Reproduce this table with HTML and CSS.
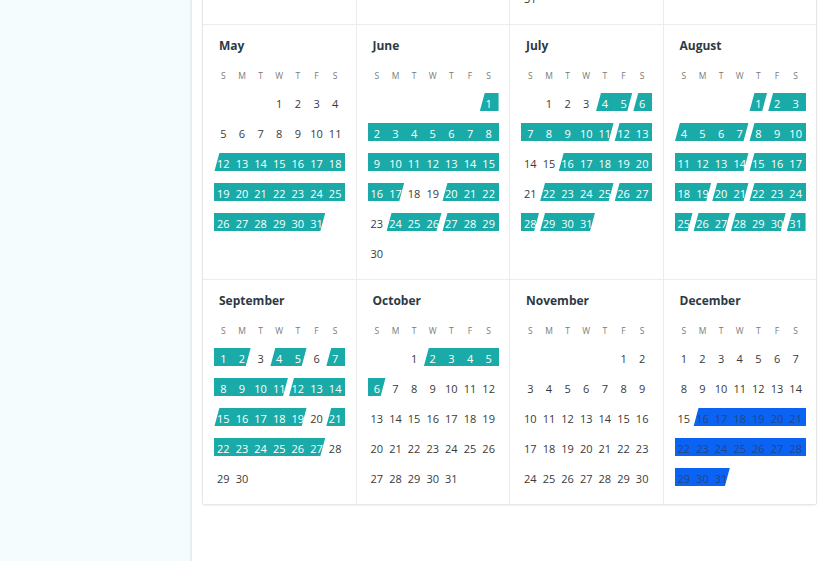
FILE: index.html
```html
<!DOCTYPE html>
<html lang="en">
<head>
<meta charset="utf-8">
<title>Calendar</title>
<link rel="stylesheet" href="styles.css">
</head>
<body>
<aside class="sidebar"></aside>
<main class="main">
  <div class="card">
    <section class="month">
      <h3 class="mname">January</h3>
      <div class="wk"><span>S</span><span>M</span><span>T</span><span>W</span><span>T</span><span>F</span><span>S</span></div>
      <div class="days">
        <span class="c o2">1</span><span class="c">2</span><span class="c">3</span><span class="c">4</span><span class="c">5</span>
        <span class="c">6</span><span class="c">7</span><span class="c">8</span><span class="c">9</span><span class="c">10</span><span class="c">11</span><span class="c">12</span>
        <span class="c">13</span><span class="c">14</span><span class="c">15</span><span class="c">16</span><span class="c">17</span><span class="c">18</span><span class="c">19</span>
        <span class="c">20</span><span class="c">21</span><span class="c">22</span><span class="c">23</span><span class="c">24</span><span class="c">25</span><span class="c">26</span>
        <span class="c">27</span><span class="c">28</span><span class="c">29</span><span class="c">30</span><span class="c">31</span>
      </div>
    </section>
    <section class="month">
      <h3 class="mname">February</h3>
      <div class="wk"><span>S</span><span>M</span><span>T</span><span>W</span><span>T</span><span>F</span><span>S</span></div>
      <div class="days">
        <span class="c o5">1</span><span class="c">2</span>
        <span class="c">3</span><span class="c">4</span><span class="c">5</span><span class="c">6</span><span class="c">7</span><span class="c">8</span><span class="c">9</span>
        <span class="c">10</span><span class="c">11</span><span class="c">12</span><span class="c">13</span><span class="c">14</span><span class="c">15</span><span class="c">16</span>
        <span class="c">17</span><span class="c">18</span><span class="c">19</span><span class="c">20</span><span class="c">21</span><span class="c">22</span><span class="c">23</span>
        <span class="c">24</span><span class="c">25</span><span class="c">26</span><span class="c">27</span><span class="c">28</span>
      </div>
    </section>
    <section class="month">
      <h3 class="mname">March</h3>
      <div class="wk"><span>S</span><span>M</span><span>T</span><span>W</span><span>T</span><span>F</span><span>S</span></div>
      <div class="days">
        <span class="c o5">1</span><span class="c">2</span>
        <span class="c">3</span><span class="c">4</span><span class="c">5</span><span class="c">6</span><span class="c">7</span><span class="c">8</span><span class="c">9</span>
        <span class="c">10</span><span class="c">11</span><span class="c">12</span><span class="c">13</span><span class="c">14</span><span class="c">15</span><span class="c">16</span>
        <span class="c">17</span><span class="c">18</span><span class="c">19</span><span class="c">20</span><span class="c">21</span><span class="c">22</span><span class="c">23</span>
        <span class="c">24</span><span class="c">25</span><span class="c">26</span><span class="c">27</span><span class="c">28</span><span class="c">29</span><span class="c">30</span>
        <span class="c">31</span>
      </div>
    </section>
    <section class="month">
      <h3 class="mname">April</h3>
      <div class="wk"><span>S</span><span>M</span><span>T</span><span>W</span><span>T</span><span>F</span><span>S</span></div>
      <div class="days">
        <span class="c o1">1</span><span class="c">2</span><span class="c">3</span><span class="c">4</span><span class="c">5</span><span class="c">6</span>
        <span class="c">7</span><span class="c">8</span><span class="c">9</span><span class="c">10</span><span class="c">11</span><span class="c">12</span><span class="c">13</span>
        <span class="c">14</span><span class="c">15</span><span class="c">16</span><span class="c">17</span><span class="c">18</span><span class="c">19</span><span class="c">20</span>
        <span class="c">21</span><span class="c">22</span><span class="c">23</span><span class="c">24</span><span class="c">25</span><span class="c">26</span><span class="c">27</span>
        <span class="c">28</span><span class="c">29</span><span class="c">30</span>
      </div>
    </section>

    <section class="month">
      <h3 class="mname">May</h3>
      <div class="wk"><span>S</span><span>M</span><span>T</span><span>W</span><span>T</span><span>F</span><span>S</span></div>
      <div class="days">
        <span class="c o3">1</span><span class="c">2</span><span class="c">3</span><span class="c">4</span>
        <span class="c">5</span><span class="c">6</span><span class="c">7</span><span class="c">8</span><span class="c">9</span><span class="c">10</span><span class="c">11</span>
        <span class="c t s">12</span><span class="c t">13</span><span class="c t">14</span><span class="c t">15</span><span class="c t">16</span><span class="c t">17</span><span class="c t">18</span>
        <span class="c t">19</span><span class="c t">20</span><span class="c t">21</span><span class="c t">22</span><span class="c t">23</span><span class="c t">24</span><span class="c t">25</span>
        <span class="c t">26</span><span class="c t">27</span><span class="c t">28</span><span class="c t">29</span><span class="c t">30</span><span class="c t e">31</span>
      </div>
    </section>
    <section class="month">
      <h3 class="mname">June</h3>
      <div class="wk"><span>S</span><span>M</span><span>T</span><span>W</span><span>T</span><span>F</span><span>S</span></div>
      <div class="days">
        <span class="c t s o6">1</span>
        <span class="c t">2</span><span class="c t">3</span><span class="c t">4</span><span class="c t">5</span><span class="c t">6</span><span class="c t">7</span><span class="c t">8</span>
        <span class="c t">9</span><span class="c t">10</span><span class="c t">11</span><span class="c t">12</span><span class="c t">13</span><span class="c t">14</span><span class="c t">15</span>
        <span class="c t">16</span><span class="c t e">17</span><span class="c">18</span><span class="c">19</span><span class="c t s">20</span><span class="c t">21</span><span class="c t">22</span>
        <span class="c">23</span><span class="c t s">24</span><span class="c t">25</span><span class="c t e">26</span><span class="c t s">27</span><span class="c t">28</span><span class="c t">29</span>
        <span class="c">30</span>
      </div>
    </section>
    <section class="month">
      <h3 class="mname">July</h3>
      <div class="wk"><span>S</span><span>M</span><span>T</span><span>W</span><span>T</span><span>F</span><span>S</span></div>
      <div class="days">
        <span class="c o1">1</span><span class="c">2</span><span class="c">3</span><span class="c t s">4</span><span class="c t e">5</span><span class="c t s">6</span>
        <span class="c t">7</span><span class="c t">8</span><span class="c t">9</span><span class="c t">10</span><span class="c t e">11</span><span class="c t s">12</span><span class="c t">13</span>
        <span class="c">14</span><span class="c">15</span><span class="c t s">16</span><span class="c t">17</span><span class="c t">18</span><span class="c t">19</span><span class="c t">20</span>
        <span class="c">21</span><span class="c t s">22</span><span class="c t">23</span><span class="c t">24</span><span class="c t e">25</span><span class="c t s">26</span><span class="c t">27</span>
        <span class="c t e">28</span><span class="c t s">29</span><span class="c t">30</span><span class="c t e">31</span>
      </div>
    </section>
    <section class="month">
      <h3 class="mname">August</h3>
      <div class="wk"><span>S</span><span>M</span><span>T</span><span>W</span><span>T</span><span>F</span><span>S</span></div>
      <div class="days">
        <span class="c t s e o4">1</span><span class="c t s">2</span><span class="c t">3</span>
        <span class="c t s">4</span><span class="c t">5</span><span class="c t">6</span><span class="c t e">7</span><span class="c t s">8</span><span class="c t">9</span><span class="c t">10</span>
        <span class="c t">11</span><span class="c t">12</span><span class="c t">13</span><span class="c t e">14</span><span class="c t s">15</span><span class="c t">16</span><span class="c t">17</span>
        <span class="c t">18</span><span class="c t e">19</span><span class="c t s">20</span><span class="c t e">21</span><span class="c t s">22</span><span class="c t">23</span><span class="c t">24</span>
        <span class="c t e">25</span><span class="c t s">26</span><span class="c t e">27</span><span class="c t s">28</span><span class="c t">29</span><span class="c t e">30</span><span class="c t s">31</span>
      </div>
    </section>

    <section class="month">
      <h3 class="mname">September</h3>
      <div class="wk"><span>S</span><span>M</span><span>T</span><span>W</span><span>T</span><span>F</span><span>S</span></div>
      <div class="days">
        <span class="c t">1</span><span class="c t e">2</span><span class="c">3</span><span class="c t s">4</span><span class="c t e">5</span><span class="c">6</span><span class="c t s">7</span>
        <span class="c t">8</span><span class="c t">9</span><span class="c t">10</span><span class="c t e">11</span><span class="c t s">12</span><span class="c t">13</span><span class="c t">14</span>
        <span class="c t s">15</span><span class="c t">16</span><span class="c t">17</span><span class="c t">18</span><span class="c t e">19</span><span class="c">20</span><span class="c t s">21</span>
        <span class="c t">22</span><span class="c t">23</span><span class="c t">24</span><span class="c t">25</span><span class="c t">26</span><span class="c t e">27</span><span class="c">28</span>
        <span class="c">29</span><span class="c">30</span>
      </div>
    </section>
    <section class="month">
      <h3 class="mname">October</h3>
      <div class="wk"><span>S</span><span>M</span><span>T</span><span>W</span><span>T</span><span>F</span><span>S</span></div>
      <div class="days">
        <span class="c o2">1</span><span class="c t s">2</span><span class="c t">3</span><span class="c t">4</span><span class="c t">5</span>
        <span class="c t e">6</span><span class="c">7</span><span class="c">8</span><span class="c">9</span><span class="c">10</span><span class="c">11</span><span class="c">12</span>
        <span class="c">13</span><span class="c">14</span><span class="c">15</span><span class="c">16</span><span class="c">17</span><span class="c">18</span><span class="c">19</span>
        <span class="c">20</span><span class="c">21</span><span class="c">22</span><span class="c">23</span><span class="c">24</span><span class="c">25</span><span class="c">26</span>
        <span class="c">27</span><span class="c">28</span><span class="c">29</span><span class="c">30</span><span class="c">31</span>
      </div>
    </section>
    <section class="month">
      <h3 class="mname">November</h3>
      <div class="wk"><span>S</span><span>M</span><span>T</span><span>W</span><span>T</span><span>F</span><span>S</span></div>
      <div class="days">
        <span class="c o5">1</span><span class="c">2</span>
        <span class="c">3</span><span class="c">4</span><span class="c">5</span><span class="c">6</span><span class="c">7</span><span class="c">8</span><span class="c">9</span>
        <span class="c">10</span><span class="c">11</span><span class="c">12</span><span class="c">13</span><span class="c">14</span><span class="c">15</span><span class="c">16</span>
        <span class="c">17</span><span class="c">18</span><span class="c">19</span><span class="c">20</span><span class="c">21</span><span class="c">22</span><span class="c">23</span>
        <span class="c">24</span><span class="c">25</span><span class="c">26</span><span class="c">27</span><span class="c">28</span><span class="c">29</span><span class="c">30</span>
      </div>
    </section>
    <section class="month">
      <h3 class="mname">December</h3>
      <div class="wk"><span>S</span><span>M</span><span>T</span><span>W</span><span>T</span><span>F</span><span>S</span></div>
      <div class="days">
        <span class="c">1</span><span class="c">2</span><span class="c">3</span><span class="c">4</span><span class="c">5</span><span class="c">6</span><span class="c">7</span>
        <span class="c">8</span><span class="c">9</span><span class="c">10</span><span class="c">11</span><span class="c">12</span><span class="c">13</span><span class="c">14</span>
        <span class="c">15</span><span class="c b s">16</span><span class="c b">17</span><span class="c b">18</span><span class="c b">19</span><span class="c b">20</span><span class="c b">21</span>
        <span class="c b">22</span><span class="c b">23</span><span class="c b">24</span><span class="c b">25</span><span class="c b">26</span><span class="c b">27</span><span class="c b">28</span>
        <span class="c b">29</span><span class="c b">30</span><span class="c b e">31</span>
      </div>
    </section>
  </div>
</main>
</body>
</html>
```
FILE: styles.css
```css
* { box-sizing: border-box; }

html, body {
  margin: 0;
  padding: 0;
  height: 100%;
}

body {
  display: flex;
  height: 100vh;
  overflow: hidden;
  background: #ffffff;
  font-family: "Open Sans", "Liberation Sans", sans-serif;
  color: #3a3a3a;
}

.sidebar {
  flex: 0 0 192px;
  background: #f5fcfd;
  border-right: 2px solid #e8eef0;
}

.main {
  flex: 1;
  min-width: 0;
  padding: 0 8px 0 10px;
  overflow: hidden;
}

.card {
  margin-top: -231px;
  display: grid;
  grid-template-columns: repeat(4, 1fr);
  gap: 1px;
  background: #ececec;
  border: 1px solid #e4e6e8;
  border-radius: 3px;
  box-shadow: 0 1px 2px rgba(0, 0, 0, 0.06);
}

.month {
  background: #ffffff;
  padding: 11px 11px 10px 11px;
}

.mname {
  margin: 0 0 13px 5px;
  height: 20px;
  line-height: 20px;
  font-size: 12px;
  font-weight: 700;
  color: #2d3a44;
}

.wk {
  display: grid;
  grid-template-columns: repeat(7, 1fr);
  height: 14px;
  line-height: 14px;
  margin-bottom: 6px;
  font-size: 8.5px;
  font-weight: 400;
  color: #7a7a7a;
  text-align: center;
}

.days {
  display: grid;
  grid-template-columns: repeat(7, 1fr);
  grid-auto-rows: 30px;
}

.c {
  position: relative;
  z-index: 0;
  text-align: center;
  font-size: 11px;
  line-height: 29px;
  color: #3a3a3a;
}

.o1 { grid-column-start: 2; }
.o2 { grid-column-start: 3; }
.o3 { grid-column-start: 4; }
.o4 { grid-column-start: 5; }
.o5 { grid-column-start: 6; }
.o6 { grid-column-start: 7; }

.t { color: #ffffff; }
.b { color: #27467e; }

.t::before,
.b::before {
  content: "";
  position: absolute;
  left: 0;
  right: -0.6px;
  top: 3.5px;
  height: 18.5px;
  z-index: -1;
  background: #1aaba8;
}

.b::before { background: #0b63f3; }

.s::before {
  clip-path: polygon(5.5px 0, 100% 0, 100% 100%, 0.5px 100%);
}

.e::before {
  right: 0;
  clip-path: polygon(0 0, calc(100% - 0.5px) 0, calc(100% - 5.5px) 100%, 0 100%);
}

.s.e::before {
  right: 0;
  clip-path: polygon(5.5px 0, calc(100% - 0.5px) 0, calc(100% - 5.5px) 100%, 0.5px 100%);
}
```
